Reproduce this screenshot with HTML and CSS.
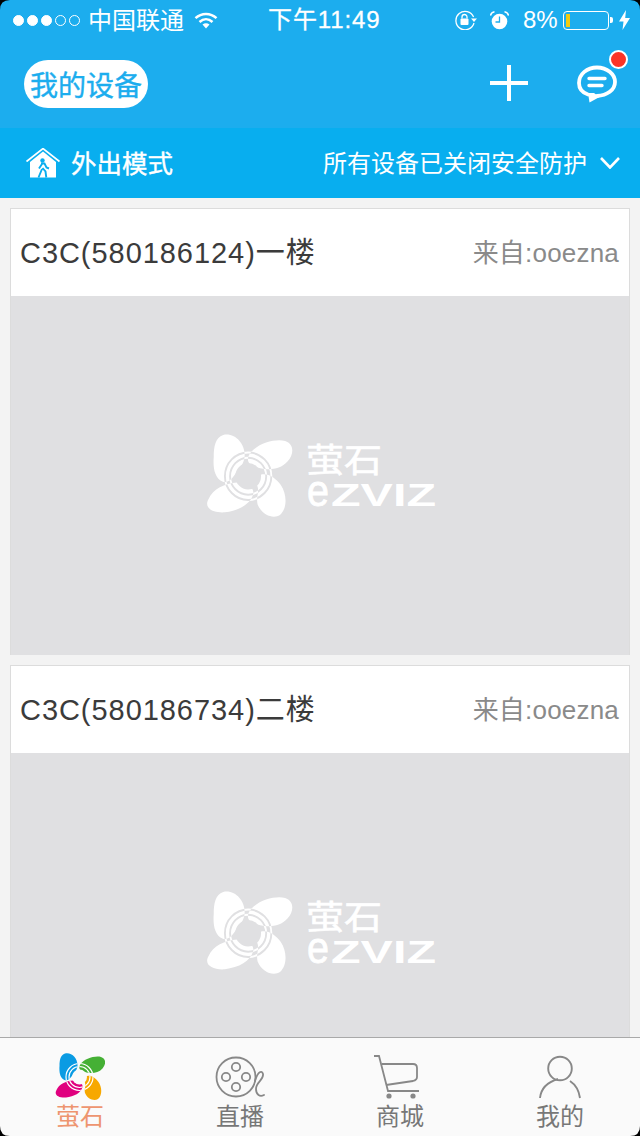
FILE: index.html
```html
<!DOCTYPE html>
<html lang="zh-CN">
<head>
<meta charset="utf-8">
<title>我的设备</title>
<link rel="stylesheet" href="styles.css">
</head>
<body>
<svg class="defs" width="0" height="0" aria-hidden="true">
  <defs>
    <clipPath id="petalClip">
      <path d="M20 1C33-2 45 10 45 24C45 34 38 40 33 47C29 53 24 56 19 54C10 50 8 38 9 26C9 14 11 4 20 1Z"/>
      <path d="M50 24C58 11 80 5 92 8C102 11 103 22 95 31C85 42 70 41 60 38C52 37 46 32 50 24Z"/>
      <path d="M3 74C8 62 22 56 36 55C48 55 56 60 55 68C52 80 38 87 22 89C8 90-3 84 3 74Z"/>
      <path d="M60 48C68 42 80 48 87 58C94 68 95 84 86 92C78 97 65 92 60 80C58 72 62 66 60 60C58 55 57 51 60 48Z"/>
    </clipPath>
    <symbol id="rings" viewBox="0 0 100 96" overflow="visible">
      <g fill="none" stroke-width="2.200">
        <circle cx="49" cy="48" r="27"/>
        <circle cx="49" cy="48" r="21"/>
      </g>
    </symbol>
  </defs>
</svg>
<div class="app">
  <header class="top">
    <div class="status">
      <div class="signal">
        <span class="dot dot-on"></span><span class="dot dot-on"></span><span class="dot dot-on"></span><span class="dot"></span><span class="dot"></span>
      </div>
      <span class="carrier">中国联通</span>
      <svg class="wifi" viewBox="0 0 24 17" width="24" height="17">
        <path d="M1.500 6.200C7.500.6 16.500.6 22.500 6.200" fill="none" stroke="#fff" stroke-width="2.500"/>
        <path d="M5.500 10C9.500 6.300 14.500 6.300 18.500 10" fill="none" stroke="#fff" stroke-width="2.500"/>
        <path d="M8.500 12.500C10.800 10.700 13.200 10.700 15.500 12.500L12 16.500Z" fill="#fff"/>
      </svg>
      <span class="time">下午11:49</span>
      <svg class="rotlock" viewBox="0 0 24 20" width="24" height="20">
        <path d="M20 13A9.200 9.200 0 1 1 19.600 7" fill="none" stroke="#fff" stroke-width="1.300"/>
        <path d="M17 8.500h6l-3 3.500Z" fill="#fff"/>
        <rect x="6.500" y="8.500" width="8" height="6.500" rx="1" fill="#fff"/>
        <path d="M8 8.500V7a2.500 2.500 0 0 1 5 0v1.500" fill="none" stroke="#fff" stroke-width="1.300"/>
      </svg>
      <svg class="alarm" viewBox="0 0 19 19" width="19" height="19">
        <circle cx="9.500" cy="10.500" r="7.800" fill="#fff"/>
        <path d="M9.500 5.500v5.500H5.500" fill="none" stroke="#1cadee" stroke-width="1.300"/>
        <path d="M.5 4.500C1 2 2.500 1 4.500.7M18.500 4.500C18 2 16.500 1 14.500.7" fill="none" stroke="#fff" stroke-width="1.400"/>
      </svg>
      <span class="percent">8%</span>
      <div class="battery"><span class="battery-level"></span></div>
      <span class="battery-nub"></span>
      <svg class="bolt" viewBox="0 0 11 20" width="11" height="20">
        <path d="M7 0 0 11.500h4.500L3.500 20 11 8H6.200Z" fill="#fff"/>
      </svg>
    </div>
    <div class="nav">
      <h1 class="pill">我的设备</h1>
      <svg class="plus" viewBox="0 0 38 36" width="38" height="36">
        <path d="M19 0v36M0 18h38" stroke="#fff" stroke-width="4" fill="none"/>
      </svg>
      <div class="chat">
        <svg viewBox="0 0 40 38" width="40" height="38">
          <path d="M11 29.500C5 27.500 2 23.500 2 18C2 9 10 2.500 20 2.500S38 9 38 17S30 30.500 20 31" fill="none" stroke="#fff" stroke-width="3.800" stroke-linecap="round"/>
          <path d="M11 28 12.500 37.500 22.500 32 17 28Z" fill="#fff"/>
          <path d="M12 13.500H28M12 20.500H25" stroke="#fff" stroke-width="3.400" stroke-linecap="round"/>
        </svg>
        <span class="badge"></span>
      </div>
    </div>
  </header>

  <div class="mode">
    <svg class="house" viewBox="0 0 34 30" width="34" height="30">
      <path d="M.5 13.500 17 .5 33.500 13.500" fill="none" stroke="#fff" stroke-width="1.600"/>
      <path d="M17 3.500 30 14V29.500H4V14Z" fill="#fff"/>
      <circle cx="16.500" cy="12.500" r="2.200" fill="#08aeef"/>
      <path d="M15 15.500h3.500l2 4 2.500 1M16 16l-3 4.500M16.500 20l3 3.500.8 6M16 21l-3.500 8.500" fill="none" stroke="#08aeef" stroke-width="1.900"/>
    </svg>
    <span class="mode-name">外出模式</span>
    <span class="mode-state">所有设备已关闭安全防护</span>
    <svg class="chevron" viewBox="0 0 20 12" width="20" height="12">
      <path d="M1 1 10 10.500 19 1" fill="none" stroke="#fff" stroke-width="2.600"/>
    </svg>
  </div>

  <main class="list">
    <article class="card">
      <div class="card-head">
        <span class="card-title">C3C(580186124)一楼</span>
        <span class="card-from">来自:ooezna</span>
      </div>
      <div class="card-body">
        <svg class="mark" viewBox="0 0 232 84" width="232" height="84">
          <g transform="scale(.86 .88)">
            <use href="#rings" width="100" height="96" class="ring-white"/>
            <g class="petals">
              <path d="M20 1C33-2 45 10 45 24C45 34 38 40 33 47C29 53 24 56 19 54C10 50 8 38 9 26C9 14 11 4 20 1Z"/>
              <path d="M50 24C58 11 80 5 92 8C102 11 103 22 95 31C85 42 70 41 60 38C52 37 46 32 50 24Z"/>
              <path d="M3 74C8 62 22 56 36 55C48 55 56 60 55 68C52 80 38 87 22 89C8 90-3 84 3 74Z"/>
              <path d="M60 48C68 42 80 48 87 58C94 68 95 84 86 92C78 97 65 92 60 80C58 72 62 66 60 60C58 55 57 51 60 48Z"/>
            </g>
            <g clip-path="url(#petalClip)"><use href="#rings" width="100" height="96" class="ring-grey"/></g>
            <circle class="mark-hub" cx="49" cy="48" r="15"/>
          </g>
          <text class="mark-cn" x="100" y="38" textLength="76" lengthAdjust="spacingAndGlyphs">萤石</text>
          <text class="mark-e" x="101" y="72" textLength="22" lengthAdjust="spacingAndGlyphs">e</text>
          <text class="mark-en" x="125" y="72" textLength="105" lengthAdjust="spacingAndGlyphs">ZVIZ</text>
        </svg>
      </div>
    </article>
    <article class="card">
      <div class="card-head">
        <span class="card-title">C3C(580186734)二楼</span>
        <span class="card-from">来自:ooezna</span>
      </div>
      <div class="card-body">
        <svg class="mark" viewBox="0 0 232 84" width="232" height="84">
          <g transform="scale(.86 .88)">
            <use href="#rings" width="100" height="96" class="ring-white"/>
            <g class="petals">
              <path d="M20 1C33-2 45 10 45 24C45 34 38 40 33 47C29 53 24 56 19 54C10 50 8 38 9 26C9 14 11 4 20 1Z"/>
              <path d="M50 24C58 11 80 5 92 8C102 11 103 22 95 31C85 42 70 41 60 38C52 37 46 32 50 24Z"/>
              <path d="M3 74C8 62 22 56 36 55C48 55 56 60 55 68C52 80 38 87 22 89C8 90-3 84 3 74Z"/>
              <path d="M60 48C68 42 80 48 87 58C94 68 95 84 86 92C78 97 65 92 60 80C58 72 62 66 60 60C58 55 57 51 60 48Z"/>
            </g>
            <g clip-path="url(#petalClip)"><use href="#rings" width="100" height="96" class="ring-grey"/></g>
            <circle class="mark-hub" cx="49" cy="48" r="15"/>
          </g>
          <text class="mark-cn" x="100" y="38" textLength="76" lengthAdjust="spacingAndGlyphs">萤石</text>
          <text class="mark-e" x="101" y="72" textLength="22" lengthAdjust="spacingAndGlyphs">e</text>
          <text class="mark-en" x="125" y="72" textLength="105" lengthAdjust="spacingAndGlyphs">ZVIZ</text>
        </svg>
      </div>
    </article>
  </main>

  <nav class="tabs">
    <div class="tab tab-active">
      <svg viewBox="0 0 100 96" width="50" height="48">
        <path fill="#0a9be3" d="M20 1C33-2 45 10 45 24C45 34 38 40 33 47C29 53 24 56 19 54C10 50 8 38 9 26C9 14 11 4 20 1Z"/>
        <path fill="#45b035" d="M50 24C58 11 80 5 92 8C102 11 103 22 95 31C85 42 70 41 60 38C52 37 46 32 50 24Z"/>
        <path fill="#e0007f" d="M3 74C8 62 22 56 36 55C48 55 56 60 55 68C52 80 38 87 22 89C8 90-3 84 3 74Z"/>
        <path fill="#f7a800" d="M60 48C68 42 80 48 87 58C94 68 95 84 86 92C78 97 65 92 60 80C58 72 62 66 60 60C58 55 57 51 60 48Z"/>
        <g fill="none" stroke="#fff" stroke-width="2.400" clip-path="url(#petalClip)">
          <circle cx="49" cy="48" r="27"/>
          <circle cx="49" cy="48" r="21"/>
        </g>
        <circle class="tab-hub" cx="49" cy="48" r="15"/>
      </svg>
      <span class="tab-label">萤石</span>
    </div>
    <div class="tab">
      <svg viewBox="0 0 50 42" width="50" height="42">
        <g fill="none" stroke="#888" stroke-width="1.800">
          <circle cx="21" cy="21" r="19.500"/>
          <circle cx="21" cy="11" r="4.200"/>
          <circle cx="21" cy="31" r="4.200"/>
          <circle cx="11" cy="21" r="4.200"/>
          <circle cx="31" cy="21" r="4.200"/>
          <path d="M40 25C43 15 47 14 48 18C49 24 41 26 41 33C41 39 45 41 49 39" stroke-linecap="round"/>
        </g>
      </svg>
      <span class="tab-label">直播</span>
    </div>
    <div class="tab">
      <svg class="cart" viewBox="0 0 46 44" width="46" height="44">
        <g fill="none" stroke="#888" stroke-width="1.800">
          <path d="M0 1H5L14 36H45"/>
          <path d="M8 9H39Q43 9 43 13V22Q43 25 39 26L12 30"/>
        </g>
        <circle cx="15" cy="41" r="2.600" fill="#888"/>
        <circle cx="39" cy="41" r="2.600" fill="#888"/>
      </svg>
      <span class="tab-label">商城</span>
    </div>
    <div class="tab">
      <svg viewBox="0 0 42 44" width="42" height="44">
        <g fill="none" stroke="#888" stroke-width="1.900">
          <circle cx="21" cy="13.500" r="11.800"/>
          <path d="M1 43C2 33 9 27 19 24M31 26C37 30 40 36 41 43"/>
        </g>
      </svg>
      <span class="tab-label">我的</span>
    </div>
  </nav>

  <span class="corner corner-tl"></span>
  <span class="corner corner-tr"></span>
  <span class="corner corner-bl"></span>
  <span class="corner corner-br"></span>
</div>
</body>
</html>
```
FILE: styles.css
```css
* { box-sizing: border-box; }
html, body { margin: 0; padding: 0; }
body {
  font-family: "Liberation Sans", "Noto Sans CJK SC", sans-serif;
  background: #f3f3f3;
}
.defs { display: block; height: 0; }
.app {
  position: relative;
  width: 640px;
  height: 1136px;
  display: flex;
  flex-direction: column;
  overflow: hidden;
}

/* Header */
.top { background: #1cadee; height: 128px; color: #fff; }
.status {
  height: 40px;
  display: flex;
  align-items: center;
  padding-left: 13px;
  font-size: 24px;
  line-height: 40px;
}
.signal { display: flex; gap: 3px; width: 75px; }
.dot {
  flex: none;
  width: 11px;
  height: 11px;
  border-radius: 50%;
  border: 1px solid #fff;
}
.dot-on { background: #fff; }
.carrier { font-family: "Noto Sans CJK SC", sans-serif; width: 106px; padding-bottom: 2px; }
.wifi { margin-right: 50px; }
.time { width: 186px; letter-spacing: .9px; -webkit-text-stroke: .3px #fff; }
.rotlock { margin-right: 12px; }
.alarm { margin-right: 14px; }
.percent { width: 40px; }
.battery {
  width: 46px;
  height: 19px;
  border: 1px solid #fff;
  border-radius: 4px;
  padding: 2px;
}
.battery-level { display: block; width: 4px; height: 100%; background: #f2cb12; }
.battery-nub {
  width: 3px;
  height: 6px;
  margin-left: 1px;
  margin-right: 6px;
  background: #fff;
  border-radius: 0 2px 2px 0;
}
.nav {
  height: 88px;
  display: flex;
  align-items: center;
  padding: 0 24px;
}
.pill {
  margin: 0;
  width: 124px;
  height: 48px;
  border-radius: 24px;
  background: #fff;
  color: #1cadee;
  font-size: 28px;
  font-weight: 400;
  -webkit-text-stroke: .4px #1cadee;
  line-height: 48px;
  text-align: center;
  font-family: "Noto Sans CJK SC", sans-serif;
}
.plus { margin-left: auto; margin-top: -2px; margin-right: 49px; }
.chat { position: relative; width: 40px; height: 38px; margin-right: -1px; }
.chat svg { display: block; }
.badge {
  position: absolute;
  top: -15px;
  left: 32px;
  width: 19px;
  height: 19px;
  border-radius: 50%;
  background: #fb3427;
  border: 2px solid #fff;
}

/* Mode bar */
.mode {
  height: 70px;
  background: #08aeef;
  color: #fff;
  display: flex;
  align-items: center;
  padding: 0 20px 0 26px;
  font-family: "Noto Sans CJK SC", sans-serif;
}
.house { margin-top: -1px; margin-right: 11px; }
.mode-name {
  font-size: 25.5px;
  font-weight: 400;
  -webkit-text-stroke: .4px #fff;
  padding-bottom: 4px;
}
.mode-state { font-size: 24px; margin-left: auto; margin-right: 13px; padding-bottom: 4px; }

/* Cards */
.list {
  flex: 1;
  min-height: 0;
  overflow: hidden;
  padding: 10px 10px 0;
  display: flex;
  flex-direction: column;
  gap: 10px;
  background: #f3f3f3;
}
.card {
  flex: none;
  height: 447px;
  border: 1px solid #dcdcdc;
  border-bottom: none;
  display: flex;
  flex-direction: column;
}
.card-head {
  height: 87px;
  background: #fff;
  display: flex;
  align-items: center;
  justify-content: space-between;
  padding: 0 10px 5px 9px;
}
.card-title { font-size: 29px; letter-spacing: .95px; color: #3b3b3b; }
.card-from { font-size: 26px; letter-spacing: .2px; color: #8a8a8a; }
.card-body {
  flex: 1;
  background: #e0e0e2;
  display: flex;
  align-items: center;
  justify-content: center;
  padding-left: 3px;
}
.petals { fill: #fff; }
.ring-white { stroke: #fff; }
.ring-grey { stroke: #e0e0e2; }
.mark-hub { fill: #e0e0e2; }
.mark-cn { font-family: "Noto Sans CJK SC", sans-serif; font-size: 33px; font-weight: 400; fill: #fff; stroke: #fff; stroke-width: .6px; }
.mark-en { font-family: "Liberation Sans", sans-serif; font-size: 32px; font-weight: 700; fill: #fff; }
.mark-e { font-family: "Liberation Sans", sans-serif; font-size: 44px; font-weight: 400; fill: #fff; stroke: #fff; stroke-width: .8px; }

/* Tabs */
.tabs {
  height: 99px;
  flex: none;
  background: #fafafa;
  border-top: 1px solid #a9a9a9;
  display: grid;
  grid-template-columns: repeat(4, 1fr);
}
.tab {
  height: 98px;
  padding-top: 15px;
  position: relative;
  display: flex;
  flex-direction: column;
  align-items: center;
  font-family: "Noto Sans CJK SC", sans-serif;
}
.tab svg { display: block; height: 48px; }
.tab .cart { margin-left: -6px; }
.tab-hub { fill: #fafafa; }
.tab-label {
  font-size: 24px;
  line-height: 28px;
  color: #777;
  margin-top: 0;
}
.tab-active .tab-label { color: #ee9570; }

/* Screen corners */
.corner { position: absolute; width: 12px; height: 12px; background: #000; }
.corner-tl { top: 0; left: 0; clip-path: path("M0 0H10Q0 0 0 10Z"); }
.corner-tr { top: 0; right: 0; clip-path: path("M12 0H2Q12 0 12 10Z"); }
.corner-bl { bottom: 0; left: 0; clip-path: path("M0 12H10Q0 12 0 2Z"); }
.corner-br { bottom: 0; right: 0; clip-path: path("M12 12H2Q12 12 12 2Z"); }
```
